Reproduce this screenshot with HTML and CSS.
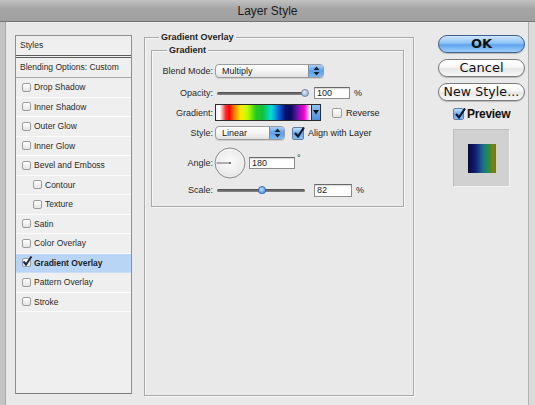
FILE: index.html
```html
<!DOCTYPE html>
<html>
<head>
<meta charset="utf-8">
<link rel="stylesheet" href="styles.css">
</head>
<body>
<div class="window">
  <div class="titlebar">Layer Style</div>
  <div class="frame">
    <div class="sidebar">
      <div class="side-head">Styles</div>
      <div class="side-blend">Blending Options: Custom</div>
      <div class="side-item"><span class="cb"></span>Drop Shadow</div>
      <div class="side-item"><span class="cb"></span>Inner Shadow</div>
      <div class="side-item"><span class="cb"></span>Outer Glow</div>
      <div class="side-item"><span class="cb"></span>Inner Glow</div>
      <div class="side-item"><span class="cb"></span>Bevel and Emboss</div>
      <div class="side-item sub"><span class="cb"></span>Contour</div>
      <div class="side-item sub"><span class="cb"></span>Texture</div>
      <div class="side-item"><span class="cb"></span>Satin</div>
      <div class="side-item"><span class="cb"></span>Color Overlay</div>
      <div class="side-item active"><span class="cb cb-on"><svg width="11" height="11" viewBox="0 0 11 11"><path d="M1.5 5.5 L4 8.5 L9.5 0.5" fill="none" stroke="#1d2a44" stroke-width="2"/></svg></span><b class="semi">Gradient Overlay</b></div>
      <div class="side-item"><span class="cb"></span>Pattern Overlay</div>
      <div class="side-item"><span class="cb"></span>Stroke</div>
    </div>

    <div class="group outer">
      <div class="legend">Gradient Overlay</div>
      <div class="group inner">
        <div class="legend">Gradient</div>

        <div class="row r1">
          <span class="lbl">Blend Mode:</span>
          <div class="select sel-blend"><span class="sel-text">Multiply</span><span class="stepper"><svg width="7" height="10" viewBox="0 0 7 10"><path d="M3.5 0.5 L6.5 4 L0.5 4 Z M0.5 6 L6.5 6 L3.5 9.5 Z" fill="#1b2235"/></svg></span></div>
        </div>

        <div class="row r2">
          <span class="lbl">Opacity:</span>
          <div class="slider sl-opacity"><div class="track"></div><span class="knob knob-gray"></span></div>
          <div class="field f-opacity">100</div>
          <span class="unit">%</span>
        </div>

        <div class="row r3">
          <span class="lbl">Gradient:</span>
          <div class="gradbar"><div class="grad"></div><span class="graddrop"><svg width="6" height="5" viewBox="0 0 6 5"><path d="M0 0 L6 0 L3 4.5 Z" fill="#111"/></svg></span></div>
          <span class="cbx cbx-rev"></span>
          <span class="opt">Reverse</span>
        </div>

        <div class="row r4">
          <span class="lbl">Style:</span>
          <div class="select sel-style"><span class="sel-text">Linear</span><span class="stepper"><svg width="7" height="10" viewBox="0 0 7 10"><path d="M3.5 0.5 L6.5 4 L0.5 4 Z M0.5 6 L6.5 6 L3.5 9.5 Z" fill="#1b2235"/></svg></span></div>
          <span class="cbx cbx-on cbx-align"><svg width="12" height="12" viewBox="0 0 12 12"><path d="M2 6 L5 9.5 L11 0.5" fill="none" stroke="#111a2c" stroke-width="2.2"/></svg></span>
          <span class="opt">Align with Layer</span>
        </div>

        <div class="row r5">
          <span class="lbl">Angle:</span>
          <svg class="dial" width="32" height="32" viewBox="0 0 32 32">
            <defs>
              <radialGradient id="dg" cx="50%" cy="45%" r="60%">
                <stop offset="0" stop-color="#fbfbfb"/>
                <stop offset="0.7" stop-color="#ececec"/>
                <stop offset="1" stop-color="#cfcfcf"/>
              </radialGradient>
            </defs>
            <circle cx="16" cy="16" r="15" fill="url(#dg)" stroke="#8d8d8d" stroke-width="1"/>
            <circle cx="16" cy="16" r="13.5" fill="none" stroke="#ffffff" stroke-width="0.8" opacity="0.7"/>
            <line x1="16" y1="16" x2="2.5" y2="16" stroke="#6a6a6a" stroke-width="1"/>
            <circle cx="16" cy="16" r="1" fill="#555"/>
          </svg>
          <div class="field f-angle">180</div>
          <span class="deg">°</span>
        </div>

        <div class="row r6">
          <span class="lbl">Scale:</span>
          <div class="slider sl-scale"><div class="track"></div><span class="knob knob-blue"></span></div>
          <div class="field f-scale">82</div>
          <span class="unit">%</span>
        </div>
      </div>
    </div>

    <div class="actions">
      <div class="btn btn-ok">OK</div>
      <div class="btn">Cancel</div>
      <div class="btn btn-new">New Style...</div>
      <div class="preview-row">
        <span class="cbx cbx-on cbx-prev"><svg width="12" height="12" viewBox="0 0 12 12"><path d="M2 6 L5 9.5 L11 0.5" fill="none" stroke="#111a2c" stroke-width="2.2"/></svg></span>
        <span class="preview-label">Preview</span>
      </div>
      <div class="preview-box"><div class="swatch"></div></div>
    </div>
  </div>
</div>
</body>
</html>
```

FILE: styles.css
```css
html, body {
  margin: 0;
  padding: 0;
  background: #e8e8e8;
}

body {
  font-family: "Liberation Sans", Arial, sans-serif;
  color: #1e1e1e;
}

.window {
  width: 535px;
  height: 405px;
  display: flex;
  flex-direction: column;
  background: #e8e8e8;
  overflow: hidden;
}

.titlebar {
  height: 22px;
  box-sizing: border-box;
  border-bottom: 1px solid #767676;
  background: linear-gradient(#c2c2c2, #a6a6a6 40%, #9f9f9f);
  text-align: center;
  font-size: 12px;
  line-height: 22px;
  color: #1c1c1c;
}

.frame {
  flex: 1;
  display: flex;
  align-items: flex-start;
  box-sizing: border-box;
  border-left: 5px solid #c3c3c3;
  border-right: 6px solid #dadada;
  padding: 13px 0 0 10px;
  background: #e9e9e9;
  box-shadow: inset 1px 0 0 #a9a9a9, inset -1px 0 0 #b0b0b0;
}

/* ---------- Sidebar ---------- */
.sidebar {
  width: 117px;
  height: 359px;
  box-sizing: border-box;
  border: 1px solid #8f8f8f;
  border-bottom-color: #7c7c7c;
  background: #efefef;
  font-size: 8.5px;
  flex-shrink: 0;
  color: #2a2a2a;
}

.side-head {
  height: 22px;
  box-sizing: border-box;
  line-height: 19px;
  padding-left: 4px;
  border-bottom: 3px double #5c5c5c;
}

.side-blend {
  height: 20px;
  box-sizing: border-box;
  line-height: 19px;
  padding-left: 4px;
  border-bottom: 1px solid #a9a9a9;
}

.side-item {
  height: 19.5px;
  box-sizing: border-box;
  display: flex;
  align-items: center;
  padding-left: 6px;
  border-bottom: 1px solid #fbfbfb;
}

.side-item.sub {
  padding-left: 17px;
}

.side-item.active {
  background: #b9d5f6;
  border-bottom-color: #c9def7;
}

.semi {
  font-weight: bold;
  color: #1a1f2a;
}

.cb {
  width: 9px;
  height: 9px;
  box-sizing: border-box;
  border: 1px solid #9c9c9c;
  border-radius: 2px;
  background: linear-gradient(#ffffff, #e4e4e4);
  margin-right: 3px;
  flex-shrink: 0;
  position: relative;
}

.cb-on svg {
  position: absolute;
  left: -1px;
  top: -3px;
}

/* ---------- Groups ---------- */
.group {
  box-sizing: border-box;
  border: 1px solid #a9a9a9;
  box-shadow: inset 1px 1px 0 #f6f6f6, 1px 1px 0 #f6f6f6;
}

.legend {
  font-size: 9px;
  font-weight: bold;
  line-height: 11px;
  height: 11px;
  margin-top: -6px;
  background: #e9e9e9;
  width: fit-content;
  padding: 0 2px;
  color: #1f1f1f;
}

.outer {
  width: 270px;
  height: 359px;
  margin-top: 2px;
  margin-left: 12px;
  flex-shrink: 0;
}

.outer > .legend {
  margin-left: 14px;
}

.inner {
  width: 253px;
  height: 157px;
  margin-top: 7px;
  margin-left: 6px;
}

.inner > .legend {
  margin-left: 15px;
}

/* ---------- Rows ---------- */
.row {
  display: flex;
  align-items: center;
  font-size: 9px;
}

.r1 { height: 16px; margin-top: 7px; }
.r2 { height: 15px; margin-top: 6px; }
.r3 { height: 17px; margin-top: 4px; }
.r4 { height: 16px; margin-top: 4px; }
.r5 { height: 32px; margin-top: 6px; }
.r6 { height: 16px; margin-top: 3px; }

.lbl {
  width: 61px;
  text-align: right;
  margin-right: 2px;
  color: #2a2a2a;
  flex-shrink: 0;
}

.select {
  height: 14px;
  box-sizing: border-box;
  border: 1px solid #9a9a9a;
  border-radius: 4px;
  background: linear-gradient(#ffffff, #f4f4f4 50%, #e2e2e2);
  display: flex;
  align-items: center;
  justify-content: space-between;
  overflow: hidden;
  box-shadow: 0 1px 0 #d0d0d0;
}

.sel-blend { width: 109px; }
.sel-style { width: 70px; }

.sel-text {
  padding-left: 6px;
  font-size: 9px;
  color: #1a1a1a;
}

.stepper {
  width: 14px;
  height: 100%;
  background: linear-gradient(#a8d0f8, #5f9fe6 50%, #7db8f2);
  border-left: 1px solid #6d8fb8;
  display: flex;
  align-items: center;
  justify-content: center;
}

.slider {
  position: relative;
  height: 10px;
  margin-left: 2px;
}

.sl-opacity { width: 89px; }
.sl-scale { width: 90px; }

.track {
  position: absolute;
  left: 0;
  right: 2px;
  top: 4px;
  height: 3px;
  border-radius: 2px;
  background: linear-gradient(#4a4a4a, #8a8a8a);
}

.knob {
  position: absolute;
  top: 1px;
  width: 8px;
  height: 8px;
  border-radius: 50%;
  box-sizing: border-box;
}

.knob-gray {
  left: 84px;
  background: radial-gradient(circle at 40% 35%, #e2ecf6, #8aa4c2);
  border: 1px solid #6f86a3;
}

.knob-blue {
  left: 41px;
  background: radial-gradient(circle at 40% 35%, #bfe0ff, #3d86e0);
  border: 1px solid #2f66b0;
  border-radius: 50% 50% 40% 40%;
}

.field {
  box-sizing: border-box;
  background: #ffffff;
  border: 1px solid #8c8c8c;
  border-top-color: #6a6a6a;
  box-shadow: inset 0 1px 1px #d6d6d6;
  font-size: 9px;
  line-height: 10px;
  padding-left: 2px;
  color: #1a1a1a;
}

.f-opacity { width: 36px; height: 12px; margin-left: 8px; }
.f-angle { width: 46px; height: 12px; margin-left: 3px; }
.f-scale { width: 38px; height: 13px; margin-left: 7px; }

.unit {
  margin-left: 4px;
  font-size: 9px;
}

.deg {
  align-self: flex-start;
  margin-left: 2px;
  margin-top: 6px;
  font-size: 9px;
}

.gradbar {
  width: 106px;
  height: 17px;
  box-sizing: border-box;
  border: 1px solid #2b2b2b;
  display: flex;
}

.grad {
  flex: 1;
  background: linear-gradient(to right,
    #fbeef0 0%, #fff 4%, #ff3030 10%, #ff0000 14%, #ff7a00 19%,
    #ffee00 26%, #b8ff00 33%, #22cc22 42%, #10c040 49%, #00e0e0 58%,
    #0a52d0 67%, #08106c 73%, #0a0a60 79%, #7a10b0 86%, #ff00cc 93%,
    #ffb0e0 97%, #fff 100%);
}

.graddrop {
  width: 8px;
  background: linear-gradient(#8ec2f4, #4a8fe0);
  border-left: 1px solid #2b2b2b;
  display: flex;
  align-items: center;
  justify-content: center;
}

.cbx {
  width: 10px;
  height: 10px;
  box-sizing: border-box;
  border: 1px solid #9a9a9a;
  border-radius: 2px;
  background: linear-gradient(#ffffff, #e6e6e6);
  position: relative;
  flex-shrink: 0;
}

.cbx-on {
  width: 12px;
  height: 13px;
  border-color: #5d7fa8;
  background: linear-gradient(#bfe0ff, #6aa8ee 50%, #8cc0f6);
}

.cbx-on svg {
  position: absolute;
  left: 0;
  top: -1px;
}

.cbx-rev { margin-left: 11px; }
.cbx-align { margin-left: 7px; }

.opt {
  margin-left: 4px;
  font-size: 9px;
  color: #222;
}

.dial {
  margin-left: -1px;
  flex-shrink: 0;
}

/* ---------- Actions ---------- */
.actions {
  width: 87px;
  margin-left: 24px;
  display: flex;
  flex-direction: column;
  flex-shrink: 0;
}

.btn {
  height: 18px;
  box-sizing: border-box;
  border: 1px solid #7a7a7a;
  border-radius: 9px;
  background: linear-gradient(#ffffff, #f6f6f6 45%, #e6e6e6 55%, #f8f8f8);
  font-family: "DejaVu Sans", sans-serif;
  font-size: 13px;
  line-height: 16px;
  text-align: center;
  color: #111;
  margin-top: 6px;
  box-shadow: 0 1px 1px #b9b9b9;
  white-space: nowrap;
}

.btn-new {
  font-size: 12.5px;
  letter-spacing: 0.1px;
}

.btn-ok {
  margin-top: 0;
  font-weight: bold;
  border-color: #3c5f8e;
  background: linear-gradient(#cfe6fd, #8ec3f6 45%, #5fa3ee 55%, #9fd0fb);
}

.preview-row {
  display: flex;
  align-items: center;
  margin-top: 7px;
  margin-left: 15px;
  height: 12px;
}

.cbx-prev {
  width: 11px;
  height: 12px;
}

.preview-label {
  margin-left: 3px;
  font-size: 12px;
  color: #111;
  font-weight: bold;
  letter-spacing: -0.3px;
}

.preview-box {
  width: 57px;
  height: 58px;
  box-sizing: border-box;
  margin-top: 9px;
  margin-left: 15px;
  border: 1px solid #bdbdbd;
  border-right-color: #f2f2f2;
  border-bottom-color: #f2f2f2;
  background: #d1d1d1;
  padding: 14px 0 0 14px;
}

.swatch {
  width: 28px;
  height: 29px;
  background: linear-gradient(to right, #0a0a3c 0%, #10176a 22%, #153c86 38%, #1b6b8c 52%, #21845a 66%, #3e8c28 78%, #7a8218 90%, #8c6a12 100%);
}
```
